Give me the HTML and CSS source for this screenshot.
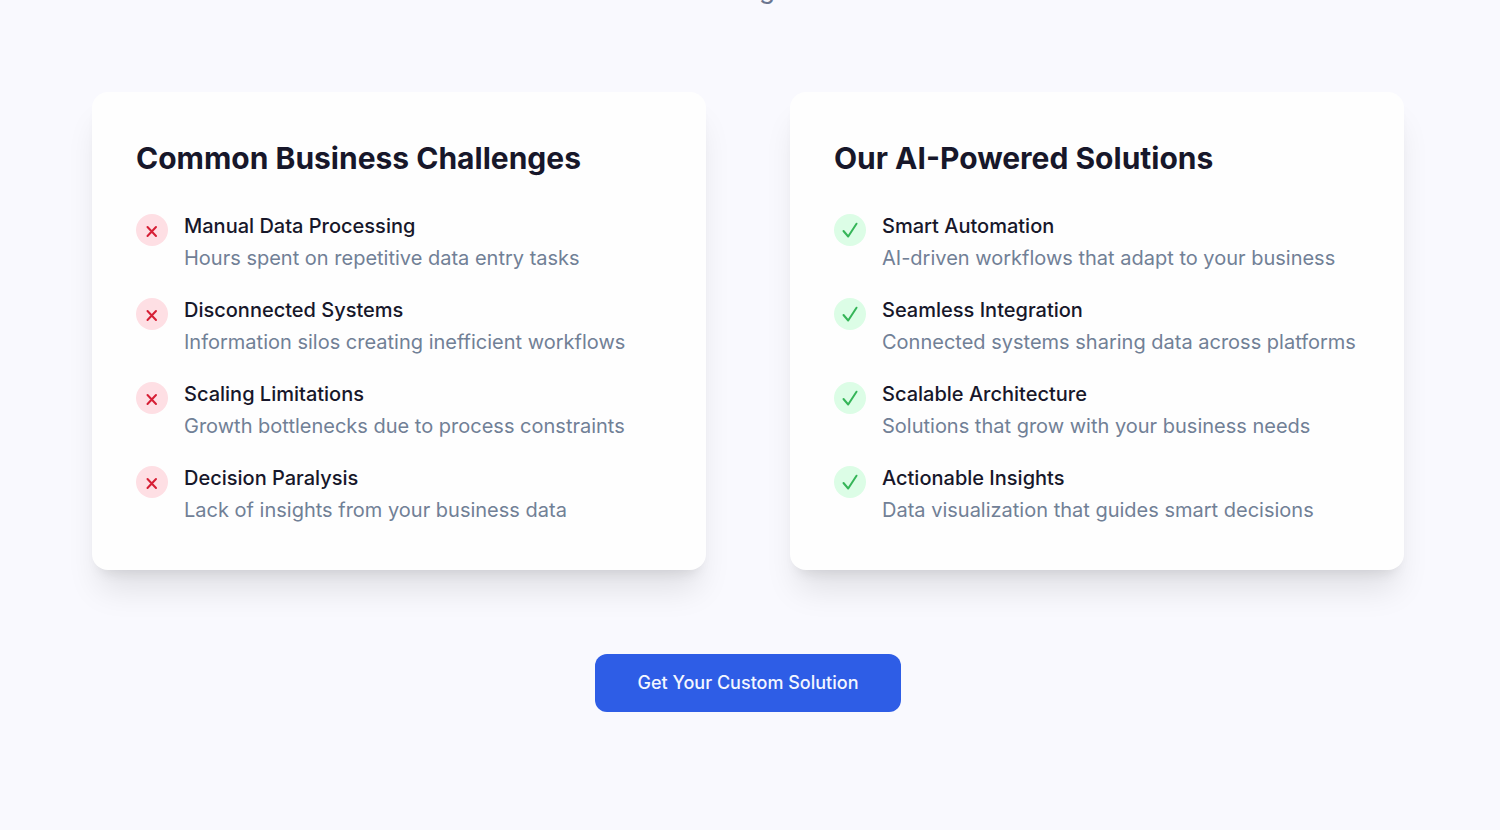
FILE: index.html
```html
<!DOCTYPE html>
<html lang="en">
<head>
  <meta charset="UTF-8">
  <meta name="viewport" content="width=device-width, initial-scale=1.0">
  <title>AI-Powered Solutions</title>
  <link rel="stylesheet" href="styles.css">
</head>
<body>
  <section class="solutions">
    <p class="intro">g</p>

    <div class="cards">
      <div class="card">
        <h3>Common Business Challenges</h3>
        <ul>
          <li>
            <span class="icon icon-bad"><svg viewBox="0 0 32 32"><path d="M11.5 13 L20 22 M20 13 L11.5 22"/></svg></span>
            <div><h4>Manual Data Processing</h4><p>Hours spent on repetitive data entry tasks</p></div>
          </li>
          <li>
            <span class="icon icon-bad"><svg viewBox="0 0 32 32"><path d="M11.5 13 L20 22 M20 13 L11.5 22"/></svg></span>
            <div><h4>Disconnected Systems</h4><p>Information silos creating inefficient workflows</p></div>
          </li>
          <li>
            <span class="icon icon-bad"><svg viewBox="0 0 32 32"><path d="M11.5 13 L20 22 M20 13 L11.5 22"/></svg></span>
            <div><h4>Scaling Limitations</h4><p>Growth bottlenecks due to process constraints</p></div>
          </li>
          <li>
            <span class="icon icon-bad"><svg viewBox="0 0 32 32"><path d="M11.5 13 L20 22 M20 13 L11.5 22"/></svg></span>
            <div><h4>Decision Paralysis</h4><p>Lack of insights from your business data</p></div>
          </li>
        </ul>
      </div>

      <div class="card">
        <h3>Our AI-Powered Solutions</h3>
        <ul>
          <li>
            <span class="icon icon-good"><svg viewBox="0 0 32 32"><path d="M9.5 17 L14.2 22.5 L22.5 9.7"/></svg></span>
            <div><h4>Smart Automation</h4><p>AI-driven workflows that adapt to your business</p></div>
          </li>
          <li>
            <span class="icon icon-good"><svg viewBox="0 0 32 32"><path d="M9.5 17 L14.2 22.5 L22.5 9.7"/></svg></span>
            <div><h4>Seamless Integration</h4><p>Connected systems sharing data across platforms</p></div>
          </li>
          <li>
            <span class="icon icon-good"><svg viewBox="0 0 32 32"><path d="M9.5 17 L14.2 22.5 L22.5 9.7"/></svg></span>
            <div><h4>Scalable Architecture</h4><p>Solutions that grow with your business needs</p></div>
          </li>
          <li>
            <span class="icon icon-good"><svg viewBox="0 0 32 32"><path d="M9.5 17 L14.2 22.5 L22.5 9.7"/></svg></span>
            <div><h4>Actionable Insights</h4><p>Data visualization that guides smart decisions</p></div>
          </li>
        </ul>
      </div>
    </div>

    <button type="button" class="cta">Get Your Custom Solution</button>
  </section>
</body>
</html>
```
FILE: styles.css
```css
* { box-sizing: border-box; }
body { margin: 0; background: #f9f9fe; color: #17172a; font-family: Inter, sans-serif; font-size: 20px; line-height: 32px; }
h3, h4, p, ul { margin: 0; padding: 0; }

.solutions { padding: 0 96px 84px 92px; text-align: center; }

/* only the tail of the intro line is in view */
.intro { display: flex; justify-content: center; align-items: flex-end; height: 5px; padding-left: 38px; overflow: hidden; color: #6b7690; font-size: 26px; }

.cards { display: grid; grid-template-columns: 1fr 1fr; gap: 84px; margin-top: 87px; text-align: left; }
.card { padding: 44px; background: #fefefe; border-radius: 16px; box-shadow: 0 26px 33px -7px rgba(0, 0, 0, 0.1), 0 10px 13px -8px rgba(0, 0, 0, 0.1); }
.card h3 { margin-bottom: 30px; font-size: 30px; line-height: 44px; font-weight: 700; }
.card ul { display: grid; gap: 20px; list-style: none; }
.card li { display: flex; gap: 16px; }
.card h4 { font-size: 20px; font-weight: 500; }
.card p { color: #718096; }

.icon { flex: none; width: 32px; height: 32px; margin-top: 4px; border-radius: 50%; }
.icon svg { display: block; fill: none; stroke-width: 2; stroke-linecap: round; stroke-linejoin: round; }
.icon-bad { background: #fedfe4; }
.icon-bad svg { stroke: #d61f35; }
.icon-good { background: #dcfde6; }
.icon-good svg { stroke: #35b558; }

.cta { margin-top: 84px; padding: 13px 43px; border: 0; border-radius: 12px; background: #2e5de6; color: #f3f6ff; font-family: inherit; font-size: 18px; line-height: 32px; font-weight: 500; cursor: pointer; }
```
